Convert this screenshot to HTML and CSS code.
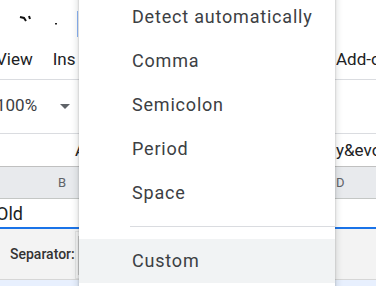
FILE: index.html
```html
<!DOCTYPE html>
<html lang="en">
<head>
    <meta charset="UTF-8">
    <meta name="viewport" content="width=device-width, initial-scale=1.0">
    <title>Separator menu</title>
    <link rel="stylesheet" href="styles.css">
</head>
<body>
    <div class="sheet">
        <div class="row titlebar">
            <svg class="marks" width="40" height="12" viewBox="0 0 40 12">
                <path d="M1 3 L5 4 L7 7" stroke="#111" stroke-width="2" fill="none"/>
                <path d="M10 2 L11 5" stroke="#111" stroke-width="2" fill="none"/>
                <rect x="36" y="9" width="2" height="1.5" fill="#222"/>
            </svg>
            <span class="title-edge"></span>
        </div>
        <div class="row menubar">
            <span class="shift">View</span>
            <span class="ins">Ins</span>
            <span class="right">Add-o</span>
        </div>
        <div class="row toolbar">
            <span class="shift zoom">100%</span>
            <span class="caret"></span>
        </div>
        <div class="row formula">
            <span class="fx">A</span>
            <span class="right">y&amp;evo</span>
        </div>
        <div class="row colheader">
            <span class="col-b">B</span>
            <span class="right">D</span>
        </div>
        <div class="row cell">
            <span class="shift">Old</span>
        </div>
        <div class="row panel">
            <span class="label">Separator:</span>
            <span class="right box"><span class="input"></span></span>
        </div>
        <div class="row strip"></div>
    </div>

    <div class="menu">
        <div class="item">Detect automatically</div>
        <div class="item">Comma</div>
        <div class="item">Semicolon</div>
        <div class="item">Period</div>
        <div class="item">Space</div>
        <div class="divider"></div>
        <div class="item active">Custom</div>
    </div>
</body>
</html>
```

FILE: styles.css
```css
body {
    margin: 0;
    width: 376px;
    height: 286px;
    overflow: hidden;
    position: relative;
    font-family: Roboto, "Noto Sans", sans-serif;
    color: #202124;
    background: #fff;
}

.sheet {
    display: flex;
    flex-direction: column;
}

.row {
    display: flex;
    align-items: center;
    position: relative;
}

.right {
    margin-left: auto;
    width: 40px;
    overflow: hidden;
    white-space: nowrap;
}

.shift {
    margin-left: -4px;
}

.titlebar {
    height: 38px;
}

.marks {
    margin-left: 19px;
    margin-top: 2px;
}

.title-edge {
    margin-left: 18px;
    width: 1px;
    height: 26px;
    margin-top: 10px;
    background: #8ab4f8;
}

.menubar {
    height: 41px;
    border-bottom: 1px solid #dadce0;
    font-size: 17px;
}

.ins {
    margin-left: 20px;
}

.toolbar {
    height: 53px;
    border-bottom: 1px solid #dadce0;
    font-size: 17px;
    color: #3c4043;
    align-items: flex-start;
}

.zoom {
    margin-top: 15px;
}

.caret {
    margin-left: 23px;
    margin-top: 24px;
    border-left: 5px solid transparent;
    border-right: 5px solid transparent;
    border-top: 5px solid #5f6368;
}

.formula {
    height: 32px;
    border-bottom: 1px solid #c0c0c0;
    font-size: 17px;
}

.fx {
    margin-left: 75px;
}

.colheader {
    height: 31px;
    background: #e8eaed;
    border-bottom: 1px solid #c4c7c5;
    font-size: 13px;
    color: #5f6368;
}

.col-b {
    margin-left: 58px;
}

.cell {
    height: 28px;
    border-bottom: 2px solid #1a73e8;
    font-size: 18px;
}

.panel {
    height: 50px;
    background: #f3f3f3;
    border-bottom: 1px solid #d6d6d6;
}

.label {
    margin-left: 10px;
    font-size: 14px;
    font-weight: 500;
    color: #333;
}

.box {
    align-self: stretch;
    margin: 2px 0 0;
    border: 1px solid #e2e2e2;
    border-right: none;
    padding: 4px 0 3px 2px;
    display: flex;
}

.input {
    width: 31px;
    background: #fff;
    border: 1px solid #c6c6c6;
}

.strip {
    height: 10px;
    background: #e8f0fe;
}

.menu {
    position: absolute;
    left: 79px;
    top: -13px;
    width: 256px;
    padding: 8px 0;
    background: #fff;
    box-shadow: 0 1px 2px rgba(60, 64, 67, 0.3), 0 2px 6px 2px rgba(60, 64, 67, 0.15);
    font-size: 18px;
    letter-spacing: 0.8px;
    color: #3c4043;
}

.item {
    height: 44px;
    line-height: 44px;
    padding-left: 53px;
    white-space: nowrap;
}

.item.active {
    background: #f1f3f4;
}

.divider {
    height: 1px;
    margin: 11px 0 12px 51px;
    background: #dadce0;
}
```
